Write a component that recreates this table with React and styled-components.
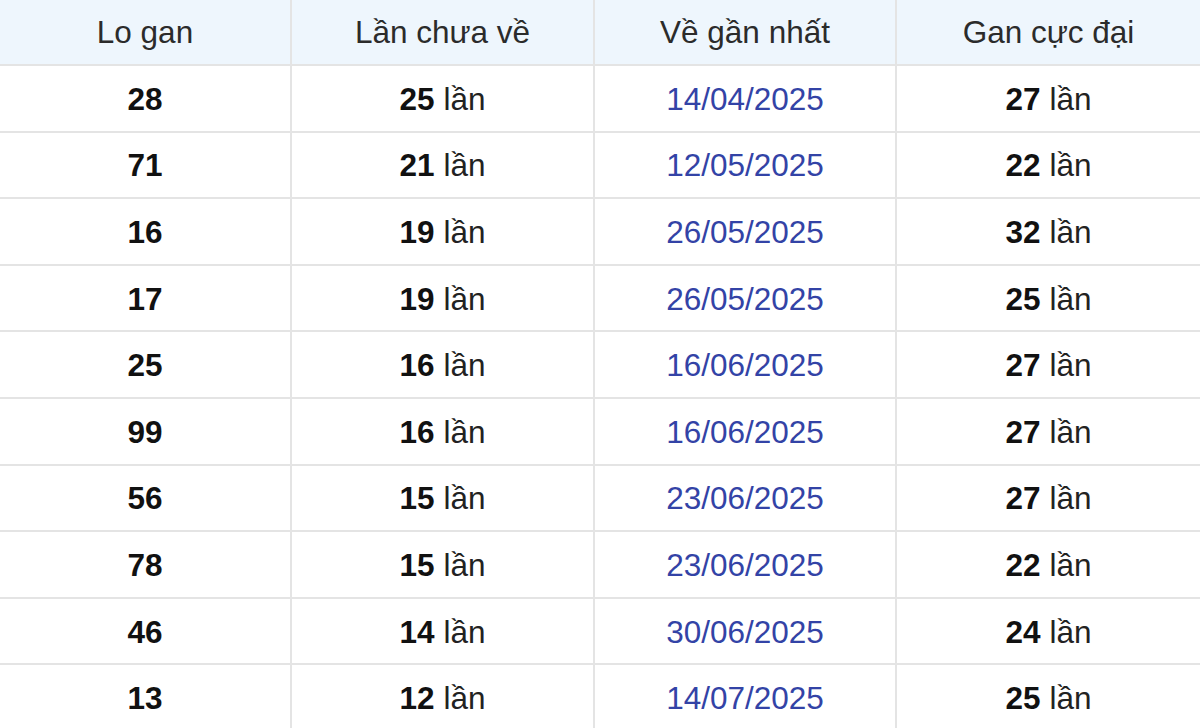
import React from 'react'
import styled, { createGlobalStyle } from 'styled-components'

const rows = [
	['28', '25', '14/04/2025', '27'],
	['71', '21', '12/05/2025', '22'],
	['16', '19', '26/05/2025', '32'],
	['17', '19', '26/05/2025', '25'],
	['25', '16', '16/06/2025', '27'],
	['99', '16', '16/06/2025', '27'],
	['56', '15', '23/06/2025', '27'],
	['78', '15', '23/06/2025', '22'],
	['46', '14', '30/06/2025', '24'],
	['13', '12', '14/07/2025', '25'],
]

const headers = ['Lo gan', 'Lần chưa về', 'Về gần nhất', 'Gan cực đại']

// "25 lần" style cell content
const Times = ({ n }) => (
	<span><b>{n}</b> lần</span>
)

export default function App() {
	return (
		<>
			<Global />
			<Table>
				{headers.map((h, i) => (
					<HeadCell key={h} $last={i === 3}>{h}</HeadCell>
				))}
				{rows.map(([lo, chua, date, max], r) => (
					<React.Fragment key={r}>
						<Cell><b>{lo}</b></Cell>
						<Cell><Times n={chua} /></Cell>
						<Cell><DateText>{date}</DateText></Cell>
						<Cell $last><Times n={max} /></Cell>
					</React.Fragment>
				))}
			</Table>
		</>
	)
}

const Global = createGlobalStyle`
	body {
		margin: 0;
		background: #fff;
		overflow: hidden;
	}
`

const Table = styled.div`
	display: grid;
	grid-template-columns: 292px 303px 302px 303px;
	grid-template-rows: 66px;
	grid-auto-rows: 66.6px;
	width: 1200px;
	font-family: 'Liberation Sans', Arial, sans-serif;
	font-size: 31.5px;
	color: #1a1a1a;
`

const Cell = styled.div`
	display: flex;
	align-items: center;
	justify-content: center;
	box-sizing: border-box;
	border-bottom: 2px solid #e4e4e4;
	border-right: ${p => (p.$last ? 'none' : '2px solid #e4e4e4')};
	color: #222;
	padding-top: 2px;

	b {
		font-weight: 700;
		color: #111;
	}
`

const HeadCell = styled(Cell)`
	background: #eef6fd;
	color: #2b2b2b;
	font-weight: 400;
	padding-top: 0;
`

const DateText = styled.span`
	color: #3343a6;
`
